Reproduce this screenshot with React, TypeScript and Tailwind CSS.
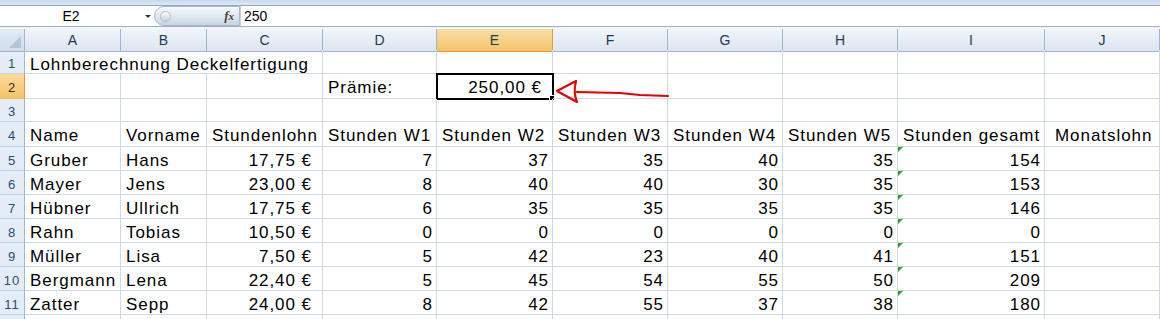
import React from "react";

const cols = ["A", "B", "C", "D", "E", "F", "G", "H", "I", "J"];

type Row = {
  name: string;
  first: string;
  wage: string;
  hours: number[];
  total: number;
};

const people: Row[] = [
  { name: "Gruber", first: "Hans", wage: "17,75 €", hours: [7, 37, 35, 40, 35], total: 154 },
  { name: "Mayer", first: "Jens", wage: "23,00 €", hours: [8, 40, 40, 30, 35], total: 153 },
  { name: "Hübner", first: "Ullrich", wage: "17,75 €", hours: [6, 35, 35, 35, 35], total: 146 },
  { name: "Rahn", first: "Tobias", wage: "10,50 €", hours: [0, 0, 0, 0, 0], total: 0 },
  { name: "Müller", first: "Lisa", wage: "7,50 €", hours: [5, 42, 23, 40, 41], total: 151 },
  { name: "Bergmann", first: "Lena", wage: "22,40 €", hours: [5, 45, 54, 55, 50], total: 209 },
  { name: "Zatter", first: "Sepp", wage: "24,00 €", hours: [8, 42, 55, 37, 38], total: 180 },
];

const gridCols =
  "grid grid-cols-[25px_96px_86px_116px_114px_116px_115px_115px_115px_147px_1fr]";

function RowHead({ n, h, active }: { n?: number; h: string; active?: boolean }) {
  return (
    <div
      className={`${h} flex items-center justify-center pt-[4px] border-r border-b text-[13px] ${
        active
          ? "bg-gradient-to-b from-[#f9dc9c] to-[#f4c36a] border-r-[#f29536] border-b-[#f2b560] text-[#3b2a10]"
          : "bg-[#e4ecf7] border-r-[#9eb6ce] border-b-[#c5d2e3] text-[#2e4a6e]"
      }`}
    >
      {n}
    </div>
  );
}

function Cell({
  h,
  children,
  right,
  money,
  flag,
  className = "",
}: {
  h: string;
  children?: React.ReactNode;
  right?: boolean;
  money?: boolean;
  flag?: boolean;
  className?: string;
}) {
  return (
    <div
      className={`${h} relative flex items-center pt-[4px] border-r border-b border-[#d0d7e5] whitespace-nowrap ${
        right ? (money ? "justify-end pr-[10px]" : "justify-end pr-[3px]") : "pl-[5px]"
      } ${className}`}
    >
      {flag && (
        <span className="absolute left-0 top-0 w-0 h-0 border-t-[5px] border-t-[#2e9e2e] border-r-[5px] border-r-transparent" />
      )}
      {children}
    </div>
  );
}

export default function App() {
  const h24 = "h-[24px]";
  return (
    <div
      className="relative w-[1160px] h-[319px] overflow-hidden bg-white text-black"
      style={{ fontFamily: '"Liberation Sans", Arial, sans-serif' }}
    >
      {/* window frame strip */}
      <div className="h-[6px] bg-gradient-to-b from-[#c7d8ee] to-[#dfe9f5] border-b border-[#8fa8c6]" />

      {/* formula bar */}
      <div className="h-[20px] flex items-center bg-white text-[14px]">
        <div className="w-[142px] text-center">E2</div>
        <div className="w-[12px] flex justify-center">
          <span className="w-0 h-0 border-l-[3px] border-l-transparent border-r-[3px] border-r-transparent border-t-[3px] border-t-[#333]" />
        </div>
        <div className="w-[86px] h-[20px] rounded-l-full bg-gradient-to-b from-[#f7f9fc] via-[#e1e8f1] to-[#c9d4e1] border border-[#a9b8ca] flex items-center">
          <span className="ml-[5px] w-[11px] h-[11px] rounded-full bg-gradient-to-b from-[#ffffff] to-[#c5d0dd] border border-[#b2bfcf]" />
          <span
            className="ml-auto mr-[5px] italic font-bold text-[13px] text-[#444]"
            style={{ fontFamily: '"Liberation Serif", "Times New Roman", serif' }}
          >
            f<span className="text-[11px]">x</span>
          </span>
        </div>
        <div className="pl-[3px] h-[20px] flex items-center border-l border-[#c6d1de]">250</div>
      </div>
      <div className="h-[1px] bg-[#9aaec6]" />
      <div className="h-[2px] bg-[#f4f6f9]" />

      {/* column headers */}
      <div className={`${gridCols} h-[21px] text-[14px] text-[#27384f]`}>
        <div className="relative border-r border-b border-[#9eb6ce] bg-gradient-to-b from-[#e3ebf6] to-[#cfdcec]">
          <span className="absolute right-[3px] bottom-[3px] w-0 h-0 border-l-[12px] border-l-transparent border-b-[12px] border-b-[#b3c3d8]" />
        </div>
        {cols.map((c) => (
          <div
            key={c}
            className={`flex items-center justify-center pt-[1px] border-r border-b ${
              c === "E"
                ? "bg-gradient-to-b from-[#f9dea4] to-[#f2c466] border-[#f29536]"
                : "bg-gradient-to-b from-[#f1f5fb] to-[#dce5f1] border-[#9eb6ce]"
            }`}
          >
            {c}
          </div>
        ))}
      </div>

      {/* sheet body */}
      <div className={`${gridCols} text-[17px] tracking-[0.95px]`}>
        {/* row 1 */}
        <RowHead n={1} h={h24} />
        <div className={`${h24} col-span-3 flex items-center pt-[6px] pl-[5px] border-r border-b border-[#d0d7e5] whitespace-nowrap`}>
          Lohnberechnung Deckelfertigung
        </div>
        {cols.slice(3).map((c) => (
          <Cell key={c} h={h24} />
        ))}

        {/* row 2 */}
        <RowHead n={2} h="h-[25px]" active />
        <Cell h="h-[25px]" />
        <Cell h="h-[25px]" />
        <Cell h="h-[25px]" />
        <Cell h="h-[25px]">Prämie:</Cell>
        <Cell h="h-[25px]" right money>
          <span className="absolute -left-[1px] -top-[1px] w-[118px] h-[27px] border-2 border-black" />
          <span className="absolute -right-[3px] -bottom-[3px] w-[6px] h-[6px] bg-black border border-white" />
          250,00 €
        </Cell>
        {cols.slice(5).map((c) => (
          <Cell key={c} h="h-[25px]" />
        ))}

        {/* row 3 */}
        <RowHead n={3} h="h-[23px]" />
        {cols.map((c) => (
          <Cell key={c} h="h-[23px]" />
        ))}

        {/* row 4 */}
        <RowHead n={4} h="h-[25px]" />
        {[
          "Name",
          "Vorname",
          "Stundenlohn",
          "Stunden W1",
          "Stunden W2",
          "Stunden W3",
          "Stunden W4",
          "Stunden W5",
          "Stunden gesamt",
        ].map((t) => (
          <Cell key={t} h="h-[25px]">
            {t}
          </Cell>
        ))}
        <Cell h="h-[25px]" className="pl-[10px]">
          Monatslohn
        </Cell>

        {/* data rows */}
        {people.map((p, i) => (
          <React.Fragment key={p.name}>
            <RowHead n={i + 5} h={h24} />
            <Cell h={h24}>{p.name}</Cell>
            <Cell h={h24}>{p.first}</Cell>
            <Cell h={h24} right money>
              {p.wage}
            </Cell>
            {p.hours.map((v, j) => (
              <Cell key={j} h={h24} right>
                {v}
              </Cell>
            ))}
            <Cell h={h24} right flag>
              {p.total}
            </Cell>
            <Cell h={h24} />
          </React.Fragment>
        ))}

        {/* row 12 (cut off by the window) */}
        <RowHead h={h24} />
        {cols.map((c) => (
          <Cell key={c} h={h24} />
        ))}
      </div>

      {/* red hand-drawn arrow */}
      <svg
        className="absolute left-0 top-0 pointer-events-none"
        width={1160}
        height={319}
        viewBox="0 0 1160 319"
      >
        <g fill="none" stroke="#e30000" strokeWidth={2.2} strokeLinecap="round" strokeLinejoin="round">
          <path d="M557 91 L576 81 Q573 92 577 102 Z" />
          <path d="M577 92 L620 93 L640 95 L668 96" />
        </g>
      </svg>
    </div>
  );
}
